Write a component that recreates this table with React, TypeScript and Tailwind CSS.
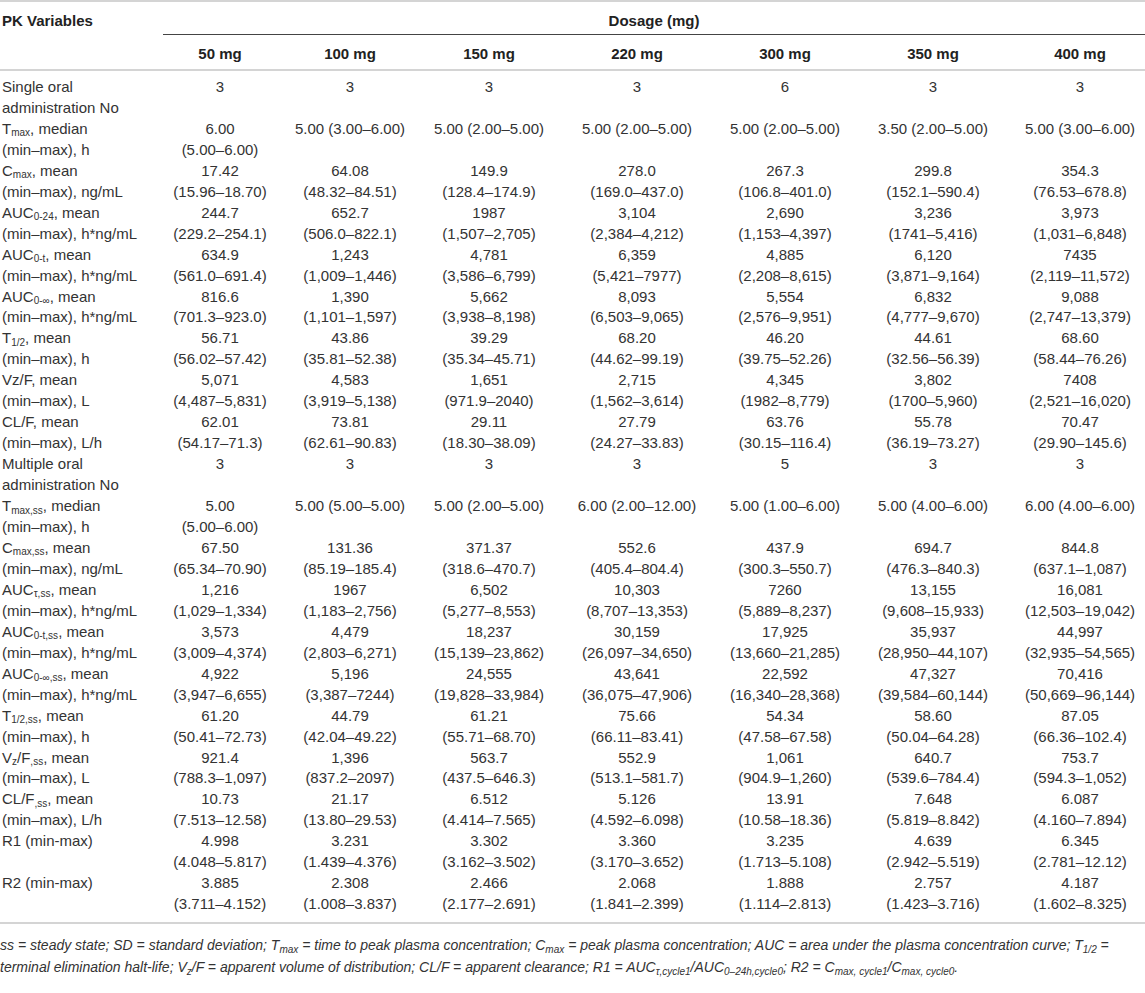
import React from "react";

type Row = { label: React.ReactNode; vals: string[][] };

const v = (a: string, b?: string) => (b ? [a, b] : [a]);

const rows: Row[] = [
  {
    label: (<>Single oral<br />administration No</>),
    vals: [v("3"), v("3"), v("3"), v("3"), v("6"), v("3"), v("3")],
  },
  {
    label: (<>T<sub>max</sub>, median<br />(min–max), h</>),
    vals: [
      v("6.00", "(5.00–6.00)"),
      v("5.00 (3.00–6.00)"),
      v("5.00 (2.00–5.00)"),
      v("5.00 (2.00–5.00)"),
      v("5.00 (2.00–5.00)"),
      v("3.50 (2.00–5.00)"),
      v("5.00 (3.00–6.00)"),
    ],
  },
  {
    label: (<>C<sub>max</sub>, mean<br />(min–max), ng/mL</>),
    vals: [
      v("17.42", "(15.96–18.70)"),
      v("64.08", "(48.32–84.51)"),
      v("149.9", "(128.4–174.9)"),
      v("278.0", "(169.0–437.0)"),
      v("267.3", "(106.8–401.0)"),
      v("299.8", "(152.1–590.4)"),
      v("354.3", "(76.53–678.8)"),
    ],
  },
  {
    label: (<>AUC<sub>0-24</sub>, mean<br />(min–max), h*ng/mL</>),
    vals: [
      v("244.7", "(229.2–254.1)"),
      v("652.7", "(506.0–822.1)"),
      v("1987", "(1,507–2,705)"),
      v("3,104", "(2,384–4,212)"),
      v("2,690", "(1,153–4,397)"),
      v("3,236", "(1741–5,416)"),
      v("3,973", "(1,031–6,848)"),
    ],
  },
  {
    label: (<>AUC<sub>0-t</sub>, mean<br />(min–max), h*ng/mL</>),
    vals: [
      v("634.9", "(561.0–691.4)"),
      v("1,243", "(1,009–1,446)"),
      v("4,781", "(3,586–6,799)"),
      v("6,359", "(5,421–7977)"),
      v("4,885", "(2,208–8,615)"),
      v("6,120", "(3,871–9,164)"),
      v("7435", "(2,119–11,572)"),
    ],
  },
  {
    label: (<>AUC<sub>0-∞</sub>, mean<br />(min–max), h*ng/mL</>),
    vals: [
      v("816.6", "(701.3–923.0)"),
      v("1,390", "(1,101–1,597)"),
      v("5,662", "(3,938–8,198)"),
      v("8,093", "(6,503–9,065)"),
      v("5,554", "(2,576–9,951)"),
      v("6,832", "(4,777–9,670)"),
      v("9,088", "(2,747–13,379)"),
    ],
  },
  {
    label: (<>T<sub>1/2</sub>, mean<br />(min–max), h</>),
    vals: [
      v("56.71", "(56.02–57.42)"),
      v("43.86", "(35.81–52.38)"),
      v("39.29", "(35.34–45.71)"),
      v("68.20", "(44.62–99.19)"),
      v("46.20", "(39.75–52.26)"),
      v("44.61", "(32.56–56.39)"),
      v("68.60", "(58.44–76.26)"),
    ],
  },
  {
    label: (<>Vz/F, mean<br />(min–max), L</>),
    vals: [
      v("5,071", "(4,487–5,831)"),
      v("4,583", "(3,919–5,138)"),
      v("1,651", "(971.9–2040)"),
      v("2,715", "(1,562–3,614)"),
      v("4,345", "(1982–8,779)"),
      v("3,802", "(1700–5,960)"),
      v("7408", "(2,521–16,020)"),
    ],
  },
  {
    label: (<>CL/F, mean<br />(min–max), L/h</>),
    vals: [
      v("62.01", "(54.17–71.3)"),
      v("73.81", "(62.61–90.83)"),
      v("29.11", "(18.30–38.09)"),
      v("27.79", "(24.27–33.83)"),
      v("63.76", "(30.15–116.4)"),
      v("55.78", "(36.19–73.27)"),
      v("70.47", "(29.90–145.6)"),
    ],
  },
  {
    label: (<>Multiple oral<br />administration No</>),
    vals: [v("3"), v("3"), v("3"), v("3"), v("5"), v("3"), v("3")],
  },
  {
    label: (<>T<sub>max,ss</sub>, median<br />(min–max), h</>),
    vals: [
      v("5.00", "(5.00–6.00)"),
      v("5.00 (5.00–5.00)"),
      v("5.00 (2.00–5.00)"),
      v("6.00 (2.00–12.00)"),
      v("5.00 (1.00–6.00)"),
      v("5.00 (4.00–6.00)"),
      v("6.00 (4.00–6.00)"),
    ],
  },
  {
    label: (<>C<sub>max,ss</sub>, mean<br />(min–max), ng/mL</>),
    vals: [
      v("67.50", "(65.34–70.90)"),
      v("131.36", "(85.19–185.4)"),
      v("371.37", "(318.6–470.7)"),
      v("552.6", "(405.4–804.4)"),
      v("437.9", "(300.3–550.7)"),
      v("694.7", "(476.3–840.3)"),
      v("844.8", "(637.1–1,087)"),
    ],
  },
  {
    label: (<>AUC<sub>τ,ss</sub>, mean<br />(min–max), h*ng/mL</>),
    vals: [
      v("1,216", "(1,029–1,334)"),
      v("1967", "(1,183–2,756)"),
      v("6,502", "(5,277–8,553)"),
      v("10,303", "(8,707–13,353)"),
      v("7260", "(5,889–8,237)"),
      v("13,155", "(9,608–15,933)"),
      v("16,081", "(12,503–19,042)"),
    ],
  },
  {
    label: (<>AUC<sub>0-t,ss</sub>, mean<br />(min–max), h*ng/mL</>),
    vals: [
      v("3,573", "(3,009–4,374)"),
      v("4,479", "(2,803–6,271)"),
      v("18,237", "(15,139–23,862)"),
      v("30,159", "(26,097–34,650)"),
      v("17,925", "(13,660–21,285)"),
      v("35,937", "(28,950–44,107)"),
      v("44,997", "(32,935–54,565)"),
    ],
  },
  {
    label: (<>AUC<sub>0-∞,ss</sub>, mean<br />(min–max), h*ng/mL</>),
    vals: [
      v("4,922", "(3,947–6,655)"),
      v("5,196", "(3,387–7244)"),
      v("24,555", "(19,828–33,984)"),
      v("43,641", "(36,075–47,906)"),
      v("22,592", "(16,340–28,368)"),
      v("47,327", "(39,584–60,144)"),
      v("70,416", "(50,669–96,144)"),
    ],
  },
  {
    label: (<>T<sub>1/2,ss</sub>, mean<br />(min–max), h</>),
    vals: [
      v("61.20", "(50.41–72.73)"),
      v("44.79", "(42.04–49.22)"),
      v("61.21", "(55.71–68.70)"),
      v("75.66", "(66.11–83.41)"),
      v("54.34", "(47.58–67.58)"),
      v("58.60", "(50.04–64.28)"),
      v("87.05", "(66.36–102.4)"),
    ],
  },
  {
    label: (<>V<sub>z</sub>/F<sub>,ss</sub>, mean<br />(min–max), L</>),
    vals: [
      v("921.4", "(788.3–1,097)"),
      v("1,396", "(837.2–2097)"),
      v("563.7", "(437.5–646.3)"),
      v("552.9", "(513.1–581.7)"),
      v("1,061", "(904.9–1,260)"),
      v("640.7", "(539.6–784.4)"),
      v("753.7", "(594.3–1,052)"),
    ],
  },
  {
    label: (<>CL/F<sub>,ss</sub>, mean<br />(min–max), L/h</>),
    vals: [
      v("10.73", "(7.513–12.58)"),
      v("21.17", "(13.80–29.53)"),
      v("6.512", "(4.414–7.565)"),
      v("5.126", "(4.592–6.098)"),
      v("13.91", "(10.58–18.36)"),
      v("7.648", "(5.819–8.842)"),
      v("6.087", "(4.160–7.894)"),
    ],
  },
  {
    label: (<>R1 (min-max)<br />&nbsp;</>),
    vals: [
      v("4.998", "(4.048–5.817)"),
      v("3.231", "(1.439–4.376)"),
      v("3.302", "(3.162–3.502)"),
      v("3.360", "(3.170–3.652)"),
      v("3.235", "(1.713–5.108)"),
      v("4.639", "(2.942–5.519)"),
      v("6.345", "(2.781–12.12)"),
    ],
  },
  {
    label: (<>R2 (min-max)<br />&nbsp;</>),
    vals: [
      v("3.885", "(3.711–4.152)"),
      v("2.308", "(1.008–3.837)"),
      v("2.466", "(2.177–2.691)"),
      v("2.068", "(1.841–2.399)"),
      v("1.888", "(1.114–2.813)"),
      v("2.757", "(1.423–3.716)"),
      v("4.187", "(1.602–8.325)"),
    ],
  },
];

const doses = ["50 mg", "100 mg", "150 mg", "220 mg", "300 mg", "350 mg", "400 mg"];

export default function App() {
  return (
    <div className="w-[1145px] bg-white font-['Liberation_Sans',Arial,sans-serif] text-[15px] text-[#333]">
      <table className="w-[1145px] table-fixed border-collapse">
        <colgroup>
          <col className="w-[163px]" />
          <col className="w-[114px]" />
          <col className="w-[146px]" />
          <col className="w-[132px]" />
          <col className="w-[164px]" />
          <col className="w-[132px]" />
          <col className="w-[164px]" />
          <col className="w-[130px]" />
        </colgroup>
        <thead>
          <tr className="border-t-2 border-[#d4d4d4]">
            <th className="pl-[2px] pt-[8px] pb-[3px] text-left align-top font-bold leading-[21px] text-[#222]">
              PK Variables
            </th>
            <th
              colSpan={7}
              className="border-b border-[#444] pt-[8px] pb-[3px] text-center align-top font-bold leading-[21px] text-[#222]"
            >
              Dosage (mg)
            </th>
          </tr>
          <tr className="border-b-2 border-[#d4d4d4]">
            <th className="pt-[8px] pb-[5px] leading-[21px]"></th>
            {doses.map((d) => (
              <th
                key={d}
                className="px-[4px] pt-[8px] pb-[5px] text-center font-bold leading-[21px] text-[#222]"
              >
                {d}
              </th>
            ))}
          </tr>
        </thead>
        <tbody className="border-b-2 border-[#d4d4d4]">
          {rows.map((r, i) => {
            const pad =
              i === 0 ? "pt-[6px]" : i === rows.length - 1 ? "pb-[7px]" : "";
            return (
              <tr key={i}>
                <td
                  className={`pl-[2px] pr-[2px] text-left align-top leading-[20.95px] [&_sub]:text-[10px] ${pad}`}
                >
                  {r.label}
                </td>
                {r.vals.map((val, j) => (
                  <td
                    key={j}
                    className={`px-[4px] text-center align-top leading-[20.95px] ${pad}`}
                  >
                    {val.map((line, k) => (
                      <React.Fragment key={k}>
                        {k > 0 && <br />}
                        {line}
                      </React.Fragment>
                    ))}
                  </td>
                ))}
              </tr>
            );
          })}
        </tbody>
      </table>
      <p className="pt-[10px] text-[14px] italic leading-[22px] [&_sub]:text-[10px]">
        ss = steady state; SD = standard deviation; T<sub>max</sub> = time to peak plasma
        concentration; C<sub>max</sub> = peak plasma concentration; AUC = area under the plasma
        concentration curve; T<sub>1/2</sub> = terminal elimination halt-life; V<sub>z</sub>/F =
        apparent volume of distribution; CL/F = apparent clearance; R1 = AUC
        <sub>τ,cycle1</sub>/AUC<sub>0–24h,cycle0</sub>; R2 = C<sub>max, cycle1</sub>/C
        <sub>max, cycle0</sub>.
      </p>
    </div>
  );
}
